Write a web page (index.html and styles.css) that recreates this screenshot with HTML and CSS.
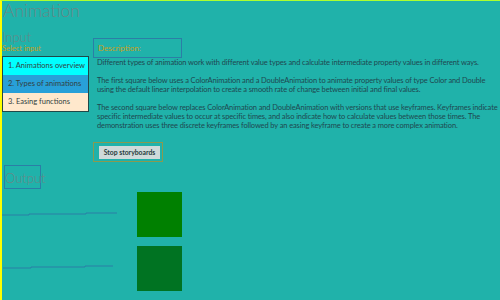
FILE: index.html
```html
<!DOCTYPE html>
<html>
<head>
    <meta charset="UTF-8">
    <title>Animation</title>
    <link rel="stylesheet" href="styles.css">
</head>
<body>
<div id="page">
    <h1 class="title">Animation</h1>
    <div class="input-row">
        <div class="input-col">
            <h2 class="heading">Input</h2>
            <p class="select">Select input</p>
            <ul class="scenarios">
                <li class="item1">1. Animations overview</li>
                <li class="item2">2. Types of animations</li>
                <li class="item3">3. Easing functions</li>
            </ul>
        </div>
        <div class="desc-col">
            <div class="desc-box">Description:</div>
            <p class="para">Different types of animation work with different value types and calculate intermediate property values in different ways.</p>
            <p class="para">The first square below uses a ColorAnimation and a DoubleAnimation to animate property values of type Color and Double using the default linear interpolation to create a smooth rate of change between initial and final values.</p>
            <p class="para">The second square below replaces ColorAnimation and DoubleAnimation with versions that use keyframes. Keyframes indicate specific intermediate values to occur at specific times, and also indicate how to calculate values between those times. The demonstration uses three discrete keyframes followed by an easing keyframe to create a more complex animation.</p>
            <div class="btn-wrap"><span class="btn">Stop storyboards</span></div>
        </div>
    </div>
    <div class="output-box">Output</div>
    <div class="output">
        <svg class="graph" width="120" height="110" viewBox="0 0 120 110">
            <polyline points="0,26 27,26 27,25 84,25 84,24 115,24" fill="none" stroke="#2b7ea6" stroke-width="1"/>
            <polyline points="1,79 29,79 29,78 83,78 83,77 111,77" fill="none" stroke="#2b7ea6" stroke-width="1"/>
        </svg>
        <div class="squares">
            <div class="square sq1"></div>
            <div class="square sq2"></div>
        </div>
    </div>
</div>
</body>
</html>
```

FILE: styles.css
```css
* {
    margin: 0;
    padding: 0;
    box-sizing: border-box;
}

html, body {
    width: 500px;
    height: 300px;
    overflow: hidden;
}

body {
    background: #20b2aa;
    font-family: "Lato", "Open Sans", sans-serif;
}

li {
    list-style: none;
}

#page {
    height: 300px;
    border-left: 2px solid #ffff00;
    border-top: 1px solid #adff2f;
}

.title {
    margin: 0 0 0 1px;
    font-size: 17.5px;
    font-weight: 300;
    line-height: 20px;
    color: #6a8686;
}

.input-row {
    display: flex;
    align-items: flex-start;
    margin-top: 9px;
}

.input-col {
    width: 90px;
}

.heading {
    font-size: 13px;
    font-weight: 300;
    line-height: 14px;
    color: #6a8686;
}

.select {
    font-size: 7.5px;
    line-height: 9px;
    color: #c8a020;
}

.scenarios {
    margin-top: 3px;
    width: 87px;
    border: 1px solid #204848;
}

.scenarios li {
    height: 18px;
    line-height: 18px;
    padding-left: 5px;
    font-size: 7.5px;
    white-space: nowrap;
    color: #333f3f;
}

.item1 {
    background: #00ffff;
}

.item2 {
    background: #28a0d8;
}

.item3 {
    background: #ffe8cc;
}

.desc-col {
    margin-top: 8px;
    width: 408px;
}

.desc-box {
    width: 89px;
    height: 20px;
    margin-left: 1px;
    padding: 3px 0 0 4px;
    border: 1px solid #2b7ea6;
    font-size: 8px;
    line-height: 13px;
    color: #c8a020;
}

.para {
    margin-left: 5px;
    margin-bottom: 9px;
    font-size: 7.5px;
    letter-spacing: -0.12px;
    line-height: 9px;
    color: #1f4850;
}

.btn-wrap {
    display: inline-block;
    margin: 3px 0 0 1px;
    padding: 3px 2px 2px 5px;
    border: 1px solid #8a9a50;
}

.btn {
    display: block;
    width: 61px;
    height: 13px;
    background: #cfdada;
    font-size: 6.8px;
    font-weight: bold;
    line-height: 13px;
    text-align: center;
    color: #263c3c;
}

.output-box {
    width: 37px;
    height: 24px;
    margin: 3px 0 0 2px;
    padding-top: 5px;
    border: 1px solid #2b7ea6;
    font-size: 13px;
    font-weight: 300;
    line-height: 14px;
    color: #6a8686;
}

.output {
    display: flex;
}

.squares {
    margin-left: 15px;
    padding-top: 3px;
}

.square {
    width: 45px;
    height: 45px;
    margin-bottom: 9px;
}

.sq1 {
    background: #008000;
}

.sq2 {
    background: #007322;
}
```
